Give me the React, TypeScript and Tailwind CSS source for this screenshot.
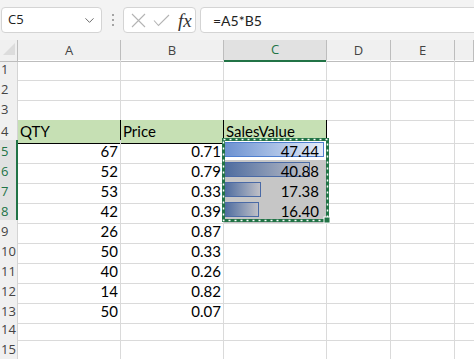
import { ChevronDown } from 'lucide-react'

const cols = ['A', 'B', 'C', 'D', 'E', '']
const gridCols = 'grid-cols-[18px_103px_103px_103px_64px_64px_1fr]'

const qty = [67, 52, 53, 42, 26, 50, 40, 14, 50]
const price = ['0.71', '0.79', '0.33', '0.39', '0.87', '0.33', '0.26', '0.82', '0.07']
const sales = [47.44, 40.88, 17.38, 16.4]
const maxSales = Math.max(...sales)

const cellFont = { fontFamily: 'Lato, "Open Sans", sans-serif' }

function Toolbar() {
  return (
    <div className="h-[40px] bg-[#f3f3f3] flex items-start pt-[7px] pl-[1px] overflow-hidden">
      <div className="shrink-0 w-[101px] h-[26px] bg-white border border-[#d4d4d4] rounded-[4px] flex items-center justify-between pl-[6px] pr-[4px]">
        <span className="text-[13px] text-[#222]" style={{ fontFamily: '"Open Sans", sans-serif' }}>C5</span>
        <ChevronDown size={15} strokeWidth={1.4} className="text-[#555]" />
      </div>
      <div className="shrink-0 w-[21px] h-[26px] flex flex-col items-center justify-center gap-[3px]">
        <span className="w-[2px] h-[2px] bg-[#8a8a8a] rounded-full" />
        <span className="w-[2px] h-[2px] bg-[#8a8a8a] rounded-full" />
        <span className="w-[2px] h-[2px] bg-[#8a8a8a] rounded-full" />
      </div>
      <div className="shrink-0 w-[73px] h-[26px] bg-white border border-[#d4d4d4] rounded-[4px] flex items-center pl-[7px] gap-[7px]">
        <svg width="15" height="15" viewBox="0 0 15 15" fill="none" stroke="#b4b4b4" strokeWidth="1.1">
          <path d="M1 1 L14 14 M14 1 L1 14" />
        </svg>
        <svg width="17" height="13" viewBox="0 0 17 13" fill="none" stroke="#b4b4b4" strokeWidth="1.1">
          <path d="M1 6.5 L5.5 11.5 L16 1" />
        </svg>
        <span className="text-[19px] italic text-[#333] leading-none ml-[1px]" style={{ fontFamily: '"Liberation Serif", serif' }}>fx</span>
      </div>
      <div className="shrink-0 ml-[4px] w-[300px] h-[26px] bg-white border border-[#d4d4d4] rounded-l-[4px] flex items-center pl-[12px]">
        <span className="text-[14px] text-[#222]" style={cellFont}>=A5*B5</span>
      </div>
    </div>
  )
}

function HeaderRow() {
  return (
    <div className={`grid ${gridCols} h-[20px] bg-[#f0f0f0]`}>
      <div className="relative border-r border-b border-[#bdbdbd]">
        <svg className="absolute left-[3px] top-[3px]" width="12" height="12" viewBox="0 0 12 12">
          <path d="M12 0 L12 12 L0 12 Z" fill="#dcdcdc" />
        </svg>
      </div>
      {cols.map((c, i) => (
        <div
          key={i}
          className={
            c === 'C'
              ? 'bg-[#e1e1e1] border-r border-[#bdbdbd] border-b-2 border-b-[#217346] flex items-center justify-center text-[13px] text-[#217346]'
              : 'border-r border-b border-[#bdbdbd] flex items-center justify-center text-[13px] text-[#444]'
          }
          style={{ fontFamily: '"Open Sans", sans-serif' }}
        >
          {c}
        </div>
      ))}
    </div>
  )
}

function Row({ n }: { n: number }) {
  const selected = n >= 5 && n <= 8
  const header = n === 4
  const above = n === 3
  const dataIdx = n - 5
  const grid = 'border-r border-b border-[#dadada]'
  const hdrCell = 'border-r border-b border-[#000] bg-[#c6e0b4] flex items-center pl-[2px] text-[15px] text-black'

  return (
    <div className={`grid ${gridCols} h-[20px]`} style={cellFont}>
      <div
        className={
          selected
            ? 'bg-[#e1e1e1] border-b border-[#d4d4d4] border-r-2 border-r-[#217346] flex items-center pl-[1px] text-[13px] text-[#217346]'
            : 'bg-[#f0f0f0] border-b border-r border-[#d4d4d4] flex items-center pl-[1px] text-[13px] text-[#444]'
        }
        style={{ fontFamily: '"Open Sans", sans-serif' }}
      >
        {n}
      </div>
      {header ? (
        <>
          <div className={hdrCell}>QTY</div>
          <div className={hdrCell}>Price</div>
          <div className={hdrCell}>SalesValue</div>
        </>
      ) : n >= 5 ? (
        <>
          <div className={`${grid} flex items-center justify-end pr-[2px] text-[15px] text-black`}>{qty[dataIdx]}</div>
          <div className={`${grid} flex items-center justify-end pr-[2px] text-[15px] text-black`}>{price[dataIdx]}</div>
          {selected ? (
            <div className={`${grid} relative flex items-center justify-end pr-[7px] text-[15px] text-black ${n === 5 ? 'bg-white' : 'bg-[#c6c6c6]'}`}>
              <div
                className={
                  n === 5
                    ? 'absolute left-[0px] top-[2px] h-[15px] border border-[#4f7fcf] bg-gradient-to-r from-[#6c91d0] to-[#e6edf8]'
                    : 'absolute left-[0px] top-[2px] h-[15px] border border-[#4a6aa6] bg-gradient-to-r from-[#4e6c9f] to-[#c0c0c6]'
                }
                style={{ width: `${(sales[dataIdx] / maxSales) * 100}px` }}
              />
              <span className="relative">{sales[dataIdx].toFixed(2)}</span>
            </div>
          ) : (
            <div className={grid} />
          )}
        </>
      ) : (
        <>
          <div className={`${grid} ${above ? 'border-b-[#000]' : ''}`} />
          <div className={`${grid} ${above ? 'border-b-[#000]' : ''}`} />
          <div className={`${grid} ${above ? 'border-b-[#000]' : ''}`} />
        </>
      )}
      <div className={grid} />
      <div className={grid} />
      <div className="border-b border-[#dadada]" />
    </div>
  )
}

export default function App() {
  return (
    <div className="relative w-[474px] h-[359px] overflow-hidden bg-white">
      <Toolbar />
      <HeaderRow />
      {Array.from({ length: 15 }, (_, i) => (
        <Row key={i} n={i + 1} />
      ))}
      {/* marching ants around C5:C8 */}
      <svg className="absolute left-[222px] top-[138px]" width="108" height="86" viewBox="0 0 108 86">
        <rect x="1.5" y="1.5" width="104" height="81" fill="none" stroke="#217346" strokeWidth="3" />
        <rect x="1.5" y="1.5" width="104" height="81" fill="none" stroke="#fff" strokeWidth="1.5" strokeDasharray="2 4" />
        <rect x="102" y="79" width="6" height="6" fill="#217346" stroke="#fff" strokeWidth="1" />
      </svg>
    </div>
  )
}
